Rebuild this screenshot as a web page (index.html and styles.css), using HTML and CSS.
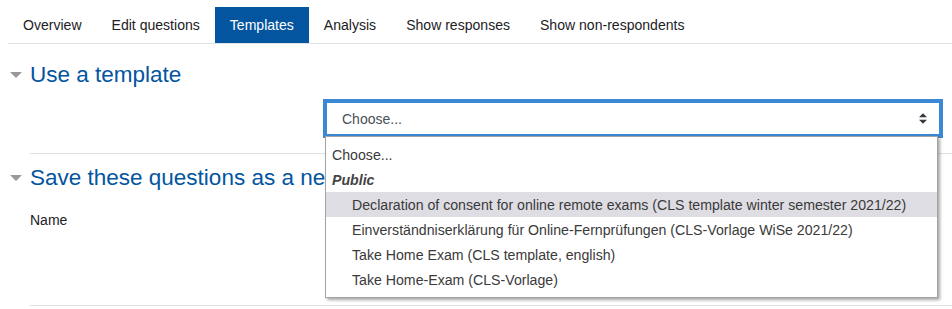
FILE: index.html
```html
<!DOCTYPE html>
<html lang="en">
<head>
<meta charset="utf-8">
<title>Templates</title>
<link rel="stylesheet" href="styles.css">
</head>
<body>
<div class="page">
  <nav class="tabs">
    <div class="tab">Overview</div>
    <div class="tab">Edit questions</div>
    <div class="tab active">Templates</div>
    <div class="tab">Analysis</div>
    <div class="tab">Show responses</div>
    <div class="tab">Show non-respondents</div>
  </nav>

  <section class="fs">
    <div class="legend"><span class="tri"></span><h3>Use a template</h3></div>
    <div class="row">
      <div class="label"></div>
      <div class="select">
        <span class="sel-text">Choose...</span>
        <svg class="arrows" width="8" height="11" viewBox="0 0 8 11"><path d="M0 4.2L4 0.2L8 4.2Z M0 6.8L4 10.8L8 6.8Z" fill="#343a40"/></svg>
        <div class="dropdown">
          <div class="opt">Choose...</div>
          <div class="opt group">Public</div>
          <div class="opt sub hl">Declaration of consent for online remote exams (CLS template winter semester 2021/22)</div>
          <div class="opt sub">Einverständniserklärung für Online-Fernprüfungen (CLS-Vorlage WiSe 2021/22)</div>
          <div class="opt sub">Take Home Exam (CLS template, english)</div>
          <div class="opt sub">Take Home-Exam (CLS-Vorlage)</div>
        </div>
      </div>
    </div>
    <div class="hr hr1"></div>
  </section>

  <section class="fs">
    <div class="legend legend2"><span class="tri"></span><h3>Save these questions as a new template</h3></div>
    <div class="row name-row">
      <div class="label">Name</div>
    </div>
    <div class="hr hr2"></div>
  </section>
</div>
</body>
</html>
```

FILE: styles.css
```css
html, body {
  margin: 0;
  background: #fff;
}
body {
  font-family: "Liberation Sans", Arial, sans-serif;
  color: #1d2125;
  overflow: hidden;
}
.page {
  padding: 7px 0 0 8px;
}
.tabs {
  display: flex;
  height: 36px;
  border-bottom: 1px solid #dee2e6;
}
.tab {
  padding: 0 15px;
  font-size: 14.05px;
  line-height: 36px;
  color: #1d2125;
  white-space: nowrap;
}
.tab.active {
  background: #03559f;
  color: #fff;
}
.legend {
  display: flex;
  align-items: center;
  margin-top: 18px;
  padding-left: 2px;
}
.legend2 {
  margin-top: 11px;
}
.tri {
  width: 0;
  height: 0;
  border-left: 6px solid transparent;
  border-right: 6px solid transparent;
  border-top: 6px solid #999;
  margin-right: 8px;
}
h3 {
  margin: 0;
  font-size: 22.5px;
  line-height: 26px;
  font-weight: normal;
  color: #03559f;
  white-space: nowrap;
}
.row {
  display: flex;
  margin-top: 11px;
}
.row .label {
  width: 293px;
  padding-left: 22px;
  font-size: 14px;
  line-height: 20px;
  color: #1d2125;
}
.name-row {
  margin-top: 19px;
}
.select {
  position: relative;
  width: 620px;
  height: 39px;
  box-sizing: border-box;
  border: 4px solid #3b89d4;
  display: flex;
  align-items: center;
  padding-left: 15px;
  font-size: 14px;
  color: #495057;
}
.arrows {
  margin-left: auto;
  margin-right: 12px;
}
.dropdown {
  position: absolute;
  top: 33px;
  left: -2px;
  width: 613px;
  box-sizing: border-box;
  border: 1px solid #a3a3a3;
  background: #fff;
  padding: 5px 0 5px;
  box-shadow: 2px 2px 3px rgba(0, 0, 0, 0.35);
  z-index: 10;
}
.opt {
  height: 25px;
  line-height: 26px;
  padding-left: 6px;
  font-size: 14.15px;
  color: #3a3a3a;
  white-space: nowrap;
}
.opt.group {
  font-weight: bold;
  font-style: italic;
  color: #444;
}
.opt.sub {
  padding-left: 26px;
}
.opt.hl {
  background: #dedde3;
}
.hr {
  margin-left: 22px;
  border-top: 1px solid #dee2e6;
}
.hr1 {
  margin-top: 15px;
}
.hr2 {
  margin-top: 75px;
}
```
